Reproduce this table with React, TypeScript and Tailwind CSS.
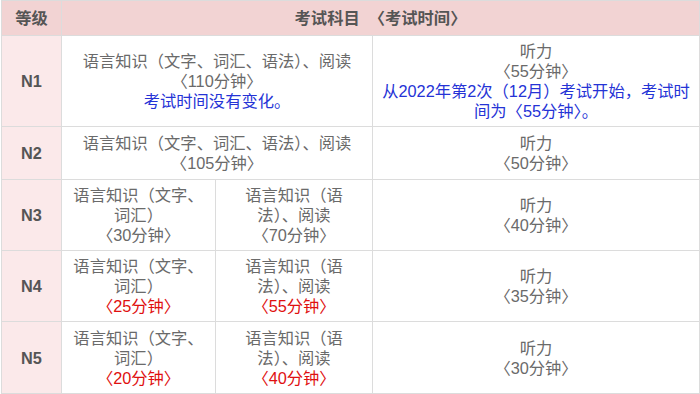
const font = { fontFamily: '"Liberation Sans", "Noto Sans CJK SC", sans-serif' };

type Part = { text: string; color?: 'blue' | 'red' };

const colorClass = (c?: 'blue' | 'red') =>
  c === 'blue' ? 'text-[#2533d6]' : c === 'red' ? 'text-[#e01010]' : 'text-[#6a6a6a]';

function Lines({ parts }: { parts: Part[] }) {
  return (
    <>
      {parts.map((p, i) => (
        <div key={i} className={colorClass(p.color)}>
          {p.text}
        </div>
      ))}
    </>
  );
}

const cell = 'border border-[#dcdcdc] text-center align-middle px-2';
const levelCell = 'border border-[#dcdcdc] bg-[#fbe9ea] text-center align-middle font-bold text-[#555555]';

export default function App() {
  const split = [
    { level: 'N3', h: 'h-[71px]', a: '〈30分钟〉', b: '〈70分钟〉', listen: '〈40分钟〉', red: false },
    { level: 'N4', h: 'h-[71px]', a: '〈25分钟〉', b: '〈55分钟〉', listen: '〈35分钟〉', red: true },
    { level: 'N5', h: 'h-[72px]', a: '〈20分钟〉', b: '〈40分钟〉', listen: '〈30分钟〉', red: true },
  ];

  return (
    <div className="w-[700px] h-[394px] bg-white pl-[1px]" style={font}>
      <table className="w-[698px] border-collapse table-fixed text-[16.3px] leading-[20px]">
        <colgroup>
          <col className="w-[60px]" />
          <col className="w-[154px]" />
          <col className="w-[157px]" />
          <col className="w-[327px]" />
        </colgroup>
        <tbody>
          <tr className="bg-[#f2d3d3]">
            <td className="border border-[#dcdcdc] h-[35px] text-center align-middle font-bold text-[#555555]">等级</td>
            <td colSpan={3} className="border border-[#dcdcdc] text-center align-middle font-bold text-[#555555]">
              考试科目 &nbsp;〈考试时间〉
            </td>
          </tr>
          <tr>
            <td className={`${levelCell} h-[91px]`}>N1</td>
            <td colSpan={2} className={cell}>
              <Lines
                parts={[
                  { text: '语言知识（文字、词汇、语法）、阅读' },
                  { text: '〈110分钟〉' },
                  { text: '考试时间没有变化。', color: 'blue' },
                ]}
              />
            </td>
            <td className={cell}>
              <Lines
                parts={[
                  { text: '听力' },
                  { text: '〈55分钟〉' },
                  { text: '从2022年第2次（12月）考试开始，考试时', color: 'blue' },
                  { text: '间为〈55分钟〉。', color: 'blue' },
                ]}
              />
            </td>
          </tr>
          <tr>
            <td className={`${levelCell} h-[53px]`}>N2</td>
            <td colSpan={2} className={cell}>
              <Lines parts={[{ text: '语言知识（文字、词汇、语法）、阅读' }, { text: '〈105分钟〉' }]} />
            </td>
            <td className={cell}>
              <Lines parts={[{ text: '听力' }, { text: '〈50分钟〉' }]} />
            </td>
          </tr>
          {split.map(row => (
            <tr key={row.level}>
              <td className={`${levelCell} ${row.h}`}>{row.level}</td>
              <td className={cell}>
                <Lines
                  parts={[
                    { text: '语言知识（文字、' },
                    { text: '词汇）' },
                    { text: row.a, color: row.red ? 'red' : undefined },
                  ]}
                />
              </td>
              <td className={cell}>
                <Lines
                  parts={[
                    { text: '语言知识（语' },
                    { text: '法）、阅读' },
                    { text: row.b, color: row.red ? 'red' : undefined },
                  ]}
                />
              </td>
              <td className={cell}>
                <Lines parts={[{ text: '听力' }, { text: row.listen }]} />
              </td>
            </tr>
          ))}
        </tbody>
      </table>
    </div>
  );
}
